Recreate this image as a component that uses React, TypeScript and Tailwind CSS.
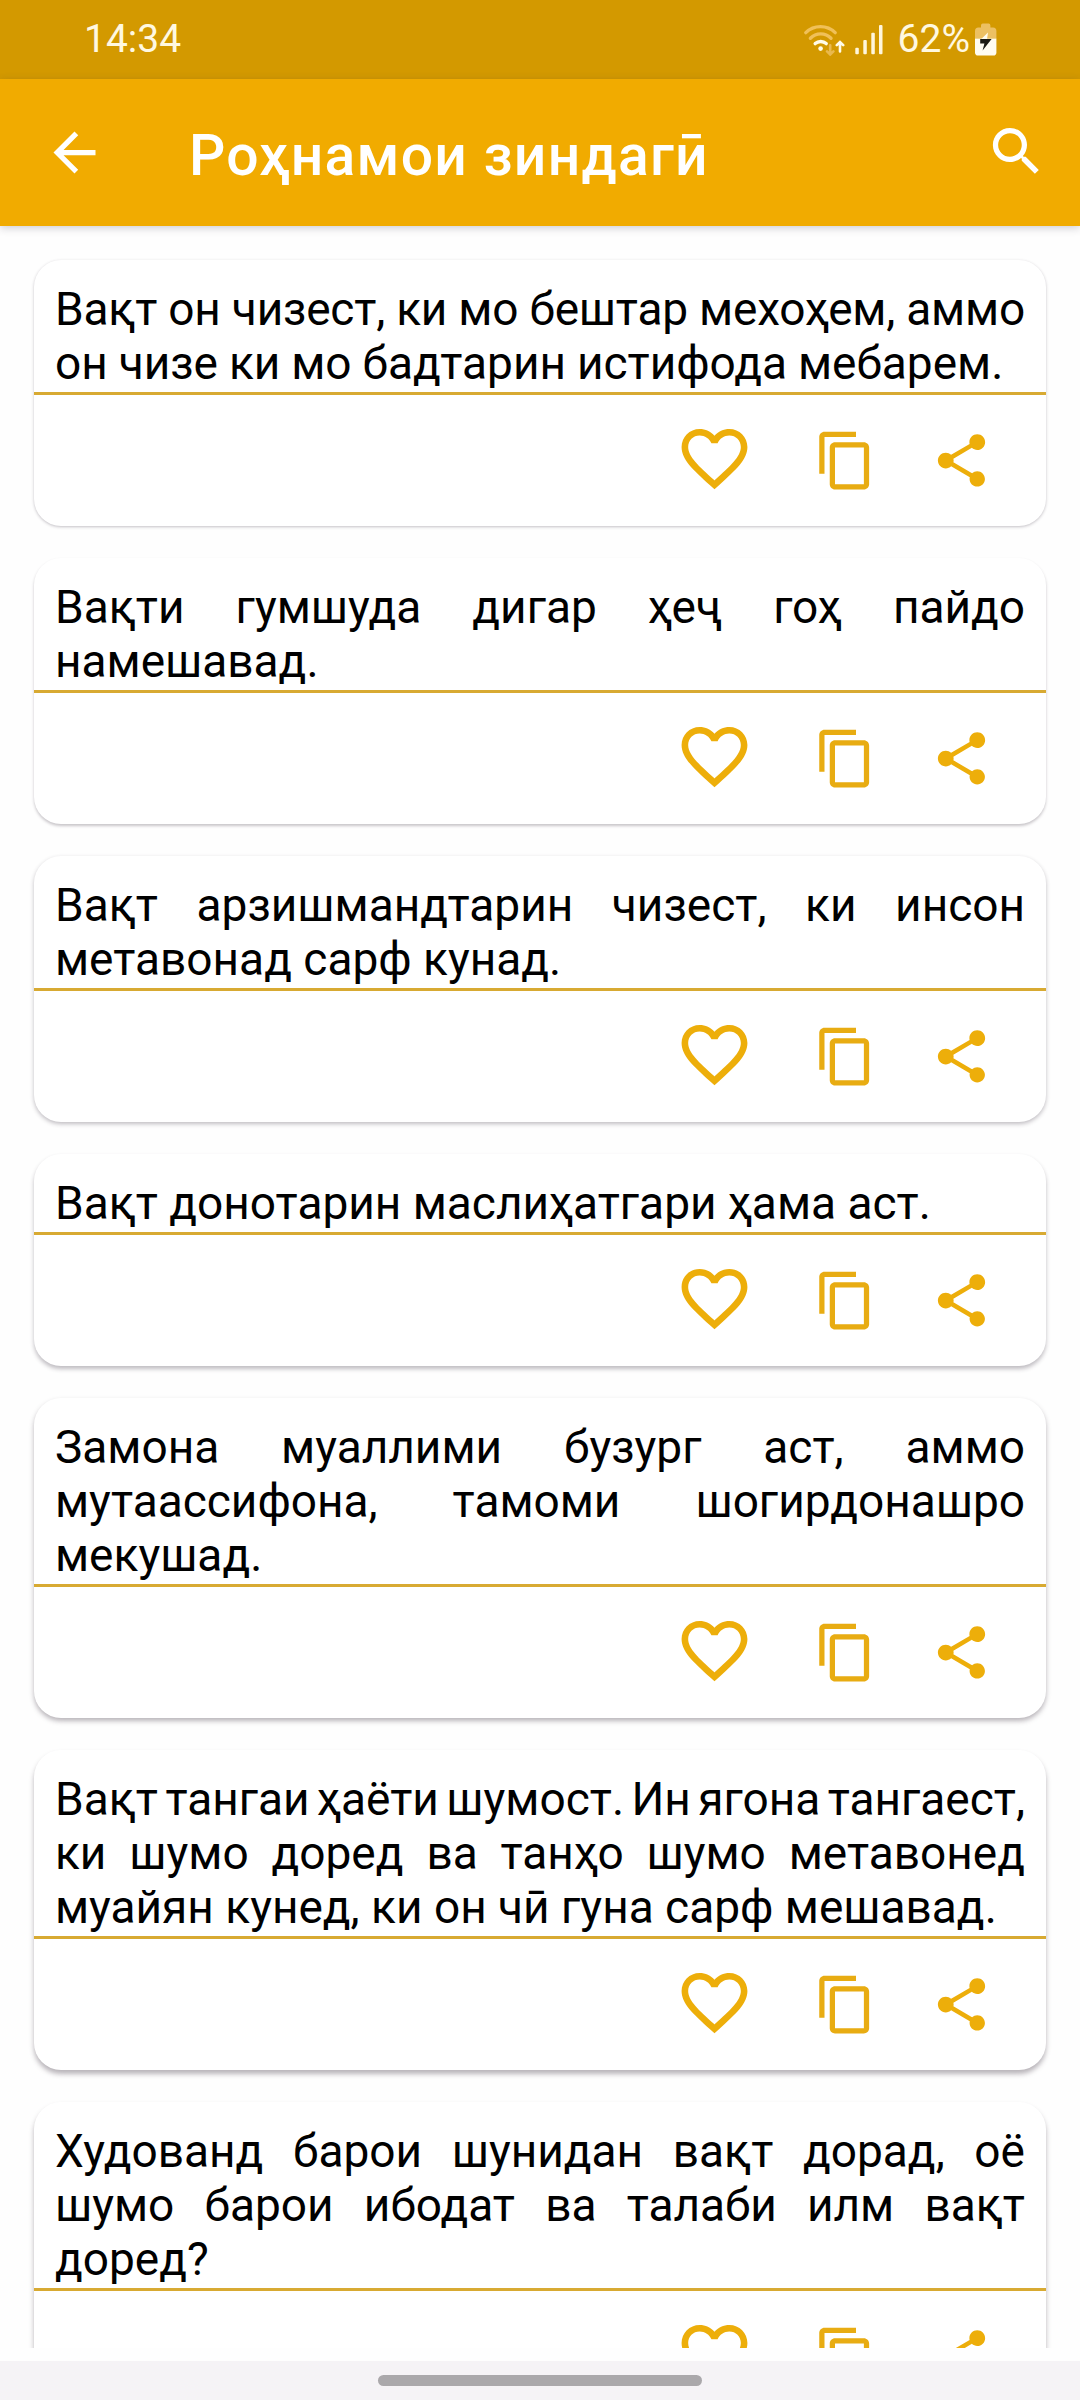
type Line = { text: string; spacing?: string };
type Quote = { lines: Line[]; shadow: string };

const SHADOWS = [
  'shadow-[0_1px_3px_rgba(60,50,65,0.30)]',
  'shadow-[0_2px_3px_rgba(60,50,65,0.28)]',
  'shadow-[0_2px_4px_rgba(60,50,65,0.32)]',
  'shadow-[0_3px_4px_rgba(60,50,65,0.32)]',
  'shadow-[0_3px_5px_rgba(60,50,65,0.36)]',
  'shadow-[0_4px_5px_rgba(60,50,65,0.36)]',
];

const quotes: Quote[] = [
  {
    lines: [
      { text: 'Вақт он чизест, ки мо бештар мехоҳем, аммо', spacing: '[word-spacing:-6px] tracking-[-0.2px]' },
      { text: 'он чизе ки мо бадтарин истифода мебарем.', spacing: '[word-spacing:-0.5px]' },
    ],
    shadow: SHADOWS[0],
  },
  { lines: [{ text: 'Вақти гумшуда дигар ҳеҷ гоҳ пайдо' }, { text: 'намешавад.' }], shadow: SHADOWS[1] },
  { lines: [{ text: 'Вақт арзишмандтарин чизест, ки инсон' }, { text: 'метавонад сарф кунад.' }], shadow: SHADOWS[2] },
  { lines: [{ text: 'Вақт донотарин маслиҳатгари ҳама аст.' }], shadow: SHADOWS[3] },
  {
    lines: [
      { text: 'Замона муаллими бузург аст, аммо' },
      { text: 'мутаассифона, тамоми шогирдонашро' },
      { text: 'мекушад.' },
    ],
    shadow: SHADOWS[4],
  },
  {
    lines: [
      { text: 'Вақт тангаи ҳаёти шумост. Ин ягона тангаест,', spacing: '[word-spacing:-8px]' },
      { text: 'ки шумо доред ва танҳо шумо метавонед' },
      { text: 'муайян кунед, ки он чӣ гуна сарф мешавад.' },
    ],
    shadow: SHADOWS[5],
  },
  {
    lines: [
      { text: 'Худованд барои шунидан вақт дорад, оё' },
      { text: 'шумо барои ибодат ва талаби илм вақт' },
      { text: 'доред?' },
    ],
    shadow: SHADOWS[5],
  },
];

function Icon({ d, className }: { d: string; className: string }) {
  return (
    <svg viewBox="0 0 24 24" fill="currentColor" className={className}>
      <path d={d} />
    </svg>
  );
}

const BACK = 'M20 11H7.83l5.59-5.59L12 4l-8 8 8 8 1.41-1.41L7.83 13H20v-2z';
const SEARCH =
  'M15.5 14h-.79l-.28-.27C15.41 12.59 16 11.11 16 9.5 16 5.91 13.09 3 9.5 3S3 5.91 3 9.5 5.91 16 9.5 16c1.61 0 3.09-.59 4.23-1.57l.27.28v.79l5 4.99L20.49 19l-4.99-5zm-6 0C7.01 14 5 11.99 5 9.5S7.01 5 9.5 5 14 7.01 14 9.5 11.99 14 9.5 14z';
const HEART =
  'M16.5 3c-1.74 0-3.41.81-4.5 2.09C10.91 3.81 9.24 3 7.5 3 4.42 3 2 5.42 2 8.5c0 3.78 3.4 6.86 8.55 11.54L12 21.35l1.45-1.32C18.6 15.36 22 12.28 22 8.5 22 5.42 19.58 3 16.5 3zm-4.4 15.55l-.1.1-.1-.1C7.14 14.24 4 11.39 4 8.5 4 6.5 5.5 5 7.5 5c1.54 0 3.04.99 3.57 2.36h1.87C13.46 5.99 14.96 5 16.5 5c2 0 3.5 1.5 3.5 3.5 0 2.89-3.14 5.74-7.9 10.05z';
const COPY =
  'M16 1H4c-1.1 0-2 .9-2 2v14h2V3h12V1zm3 4H8c-1.1 0-2 .9-2 2v14c0 1.1.9 2 2 2h11c1.1 0 2-.9 2-2V7c0-1.1-.9-2-2-2zm0 16H8V7h11v14z';
const SHARE =
  'M18 16.08c-.76 0-1.44.3-1.96.77L8.91 12.7c.05-.23.09-.46.09-.7s-.04-.47-.09-.7l7.05-4.11c.54.5 1.25.81 2.04.81 1.66 0 3-1.34 3-3s-1.34-3-3-3-3 1.34-3 3c0 .24.04.47.09.7L8.04 9.81C7.5 9.31 6.79 9 6 9c-1.66 0-3 1.34-3 3s1.34 3 3 3c.79 0 1.5-.31 2.04-.81l7.12 4.16c-.05.21-.08.43-.08.65 0 1.61 1.31 2.92 2.92 2.92 1.61 0 2.92-1.31 2.92-2.92s-1.31-2.92-2.92-2.92z';

function WifiIcon() {
  return (
    <svg viewBox="0 0 42 34" className="mb-[2px] h-[34px] w-[42px]" fill="none" strokeLinecap="round">
      <g stroke="#f0c058" strokeWidth="3.4">
        <path d="M2.8 10.6A21 21 0 0 1 32.2 10.6" />
        <path d="M7.4 16.2A14.5 14.5 0 0 1 28 16.2" />
      </g>
      <path d="M12.2 21.6A8.3 8.3 0 0 1 23.2 21.6" stroke="#fffbe8" strokeWidth="3.4" />
      <circle cx="17.6" cy="26.6" r="2.3" fill="#fffbe8" />
      <path d="M27.2 23.2v9M24 29.3l3.2 3.2 3.2-3.2" stroke="#e9b94e" strokeWidth="2.6" />
      <path d="M37 29.5v-9M33.8 23.2l3.2-3.2 3.2 3.2" stroke="#fffbe8" strokeWidth="2.6" />
    </svg>
  );
}

function SignalIcon() {
  return (
    <svg viewBox="0 0 28 30" className="h-[30px] w-[28px]" fill="#fff6dc">
      <rect x="0.3" y="22.7" width="3.5" height="6.6" rx="1" />
      <rect x="8.3" y="15" width="3.5" height="14.3" rx="1" />
      <rect x="16.3" y="7.7" width="3.5" height="21.6" rx="1" />
      <rect x="24" y="0" width="3.5" height="29.3" rx="1" />
    </svg>
  );
}

function BatteryIcon() {
  return (
    <svg viewBox="0 0 22 33" className="h-[33px] w-[22px]">
      <path d="M6 4.5V2.4Q6 .6 7.8 .6H13.6Q15.4 .6 15.4 2.4V4.5H18Q21.4 4.5 21.4 8V15.6H0V8Q0 4.5 3.4 4.5Z" fill="#ecc063" />
      <path d="M0 15.6H21.4V29.5Q21.4 32.6 18.2 32.6H3.2Q0 32.6 0 29.5Z" fill="#fffcf0" />
      <path d="M13 9.6L6 16.2H12Z" fill="#fffcf0" />
      <path d="M5.2 16H16.6L7.6 27.4L9.4 20.4H5.2Z" fill="#1b1a12" />
    </svg>
  );
}

function QuoteCard({ quote }: { quote: Quote }) {
  return (
    <article className={`shrink-0 rounded-[27px] bg-white ${quote.shadow}`}>
      <p className="pt-[22px] pr-[21px] pb-[2px] pl-[21px] text-[46px] leading-[54px] text-black">
        {quote.lines.map((line, i) => (
          <span
            key={line.text}
            className={[
              'block whitespace-nowrap',
              i < quote.lines.length - 1 ? '[text-align-last:justify]' : '',
              line.spacing ?? '',
            ].join(' ')}
          >
            {line.text}
          </span>
        ))}
      </p>
      <div className="h-[3px] bg-[#d8aa32]" />
      <div className="flex h-[131px] items-center justify-end pr-[53px] text-[#edae0a]">
        <Icon d={HEART} className="mr-[60px] mb-[4px] size-[79px]" />
        <Icon d={COPY} className="mr-[53px] size-[63px] text-[#e8ac12]" />
        <Icon d={SHARE} className="size-[63px]" />
      </div>
    </article>
  );
}

export default function App() {
  return (
    <div className="flex h-[2400px] w-[1080px] flex-col overflow-hidden bg-[#fefefe] font-[Roboto,sans-serif]">
      <div className="flex h-[79px] shrink-0 items-center justify-between bg-[#d39900] pr-[83px] pl-[84px] text-[39px] leading-none text-[#fff8e0]">
        <span>14:34</span>
        <div className="flex items-center">
          <WifiIcon />
          <span className="ml-[10px]">
            <SignalIcon />
          </span>
          <span className="ml-[15px]">62%</span>
          <span className="ml-[5px]">
            <BatteryIcon />
          </span>
        </div>
      </div>
      <header className="relative z-10 flex h-[147px] shrink-0 items-center bg-[#f1ab00] pr-[32px] pl-[43px] text-white shadow-[0_2px_8px_rgba(60,50,65,0.24)]">
        <Icon d={BACK} className="size-[63px]" />
        <h1 className="mt-[5px] ml-[83px] grow text-[57px] leading-[67px] font-medium tracking-[1.25px]">Роҳнамои зиндагӣ</h1>
        <Icon d={SEARCH} className="mb-[2px] size-[63px]" />
      </header>
      <main className="flex h-[2122px] shrink-0 flex-col gap-[32px] overflow-hidden px-[34px] pt-[34px]">
        {quotes.map((quote) => (
          <QuoteCard key={quote.lines[0].text} quote={quote} />
        ))}
      </main>
      <div className="mt-[13px] flex h-[39px] shrink-0 justify-center bg-[#f5f3f6] pt-[14px]">
        <div className="h-[11px] w-[324px] rounded-full bg-[#aaa8ab]" />
      </div>
    </div>
  );
}
